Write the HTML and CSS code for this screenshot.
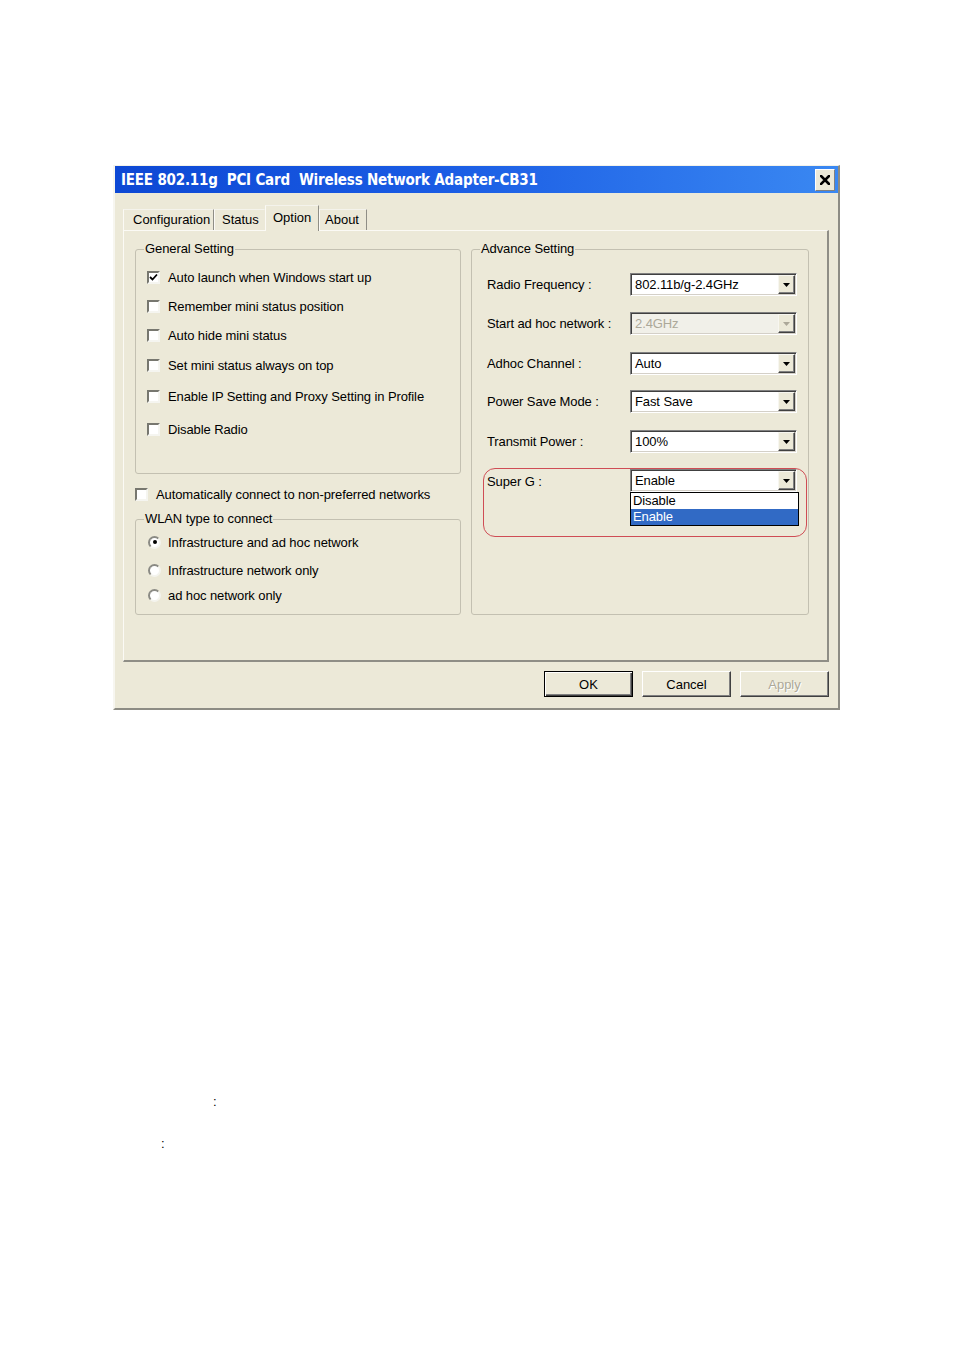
FILE: index.html
```html
<!DOCTYPE html>
<html>
<head>
<meta charset="utf-8">
<title>IEEE 802.11g PCI Card Wireless Network Adapter-CB31</title>
<link rel="stylesheet" href="styles.css">
</head>
<body>
<div class="dialog">
  <div class="titlebar">
    <span class="title">IEEE 802.11g&nbsp; PCI Card&nbsp; Wireless Network Adapter-CB31</span>
    <span class="close"><svg width="10" height="10" viewBox="0 0 10 10"><path d="M1 1 L9 9 M9 1 L1 9" stroke="#000" stroke-width="2.6" stroke-linecap="square"/></svg></span>
  </div>
  <div class="tabs">
    <span class="tab tab-config">Configuration</span>
    <span class="tab tab-status">Status</span>
    <span class="tab tab-option active">Option</span>
    <span class="tab tab-about">About</span>
  </div>
  <div class="panel">
    <div class="col-left">
      <fieldset class="group general">
        <legend>General Setting</legend>
        <div class="check-list">
          <div class="check"><span class="box"><svg width="9" height="9" viewBox="0 0 9 9"><path d="M1 4 L3.5 6.5 L8 1.5" fill="none" stroke="#000" stroke-width="1.8"/></svg></span><span>Auto launch when Windows start up</span></div>
          <div class="check"><span class="box"></span><span>Remember mini status position</span></div>
          <div class="check"><span class="box"></span><span>Auto hide mini status</span></div>
          <div class="check"><span class="box"></span><span>Set mini status always on top</span></div>
          <div class="check"><span class="box"></span><span>Enable IP Setting and Proxy Setting in Profile</span></div>
          <div class="check"><span class="box"></span><span>Disable Radio</span></div>
        </div>
      </fieldset>
      <div class="check auto-connect"><span class="box"></span><span>Automatically connect to non-preferred networks</span></div>
      <fieldset class="group wlan">
        <legend>WLAN type to connect</legend>
        <div class="radio-list">
          <div class="check radio-row"><span class="radio on"><span class="dot"></span></span><span>Infrastructure and ad hoc network</span></div>
          <div class="check radio-row"><span class="radio"></span><span>Infrastructure network only</span></div>
          <div class="check radio-row"><span class="radio"></span><span>ad hoc network only</span></div>
        </div>
      </fieldset>
    </div>
    <fieldset class="group advance">
      <legend>Advance Setting</legend>
      <div class="adv-rows">
        <div class="field"><span class="flabel">Radio Frequency :</span><span class="combo"><span class="cval">802.11b/g-2.4GHz</span><span class="cbtn"><svg width="7" height="4" viewBox="0 0 7 4"><path d="M0 0 H7 L3.5 4 Z" fill="#000"/></svg></span></span></div>
        <div class="field"><span class="flabel">Start ad hoc network :</span><span class="combo disabled"><span class="cval">2.4GHz</span><span class="cbtn"><svg width="7" height="4" viewBox="0 0 7 4"><path d="M0 0 H7 L3.5 4 Z" fill="#aca899"/></svg></span></span></div>
        <div class="field"><span class="flabel">Adhoc Channel :</span><span class="combo"><span class="cval">Auto</span><span class="cbtn"><svg width="7" height="4" viewBox="0 0 7 4"><path d="M0 0 H7 L3.5 4 Z" fill="#000"/></svg></span></span></div>
        <div class="field"><span class="flabel">Power Save Mode :</span><span class="combo"><span class="cval">Fast Save</span><span class="cbtn"><svg width="7" height="4" viewBox="0 0 7 4"><path d="M0 0 H7 L3.5 4 Z" fill="#000"/></svg></span></span></div>
        <div class="field"><span class="flabel">Transmit Power :</span><span class="combo"><span class="cval">100%</span><span class="cbtn"><svg width="7" height="4" viewBox="0 0 7 4"><path d="M0 0 H7 L3.5 4 Z" fill="#000"/></svg></span></span></div>
        <div class="superg">
          <span class="flabel sg-label">Super G :</span>
          <span class="combo"><span class="cval">Enable</span><span class="cbtn"><svg width="7" height="4" viewBox="0 0 7 4"><path d="M0 0 H7 L3.5 4 Z" fill="#000"/></svg></span></span>
          <div class="dropdown">
            <div class="item">Disable</div>
            <div class="item sel">Enable</div>
          </div>
        </div>
      </div>
    </fieldset>
  </div>
  <div class="buttons">
    <span class="btn default">OK</span>
    <span class="btn">Cancel</span>
    <span class="btn disabled">Apply</span>
  </div>
</div>
<div class="notes">
  <p class="note note-1">:</p>
  <p class="note note-2">:</p>
</div>
</body>
</html>
```
FILE: styles.css
```css
body {
  margin: 0;
  background: #fff;
  font-family: "Liberation Sans", Arial, sans-serif;
  font-size: 13px;
  color: #000;
}

.dialog {
  box-sizing: border-box;
  width: 727px;
  height: 545px;
  margin: 165px 0 0 113px;
  background: #ece9d8;
  border-top: 1px solid #f3f2ea;
  border-left: 2px solid #f7f6f0;
  border-right: 2px solid #8d8c84;
  border-bottom: 2px solid #8d8c84;
  display: flex;
  flex-direction: column;
}

.titlebar {
  height: 27px;
  flex: none;
  display: flex;
  align-items: center;
  justify-content: space-between;
  padding: 0 3px 0 6px;
  background: linear-gradient(90deg, #0d48d4 0%, #1a5ce4 45%, #3a88f2 100%);
}

.title {
  color: #fff;
  font-family: "DejaVu Sans Condensed", "Liberation Sans", sans-serif;
  font-stretch: condensed;
  font-weight: bold;
  font-size: 15px;
  letter-spacing: -0.2px;
  white-space: nowrap;
}

.close {
  box-sizing: border-box;
  width: 20px;
  height: 22px;
  background: #ece9d8;
  border: 1px solid;
  border-color: #fff #808080 #808080 #fff;
  display: flex;
  align-items: center;
  justify-content: center;
}

.tabs {
  height: 37px;
  flex: none;
  display: flex;
  align-items: flex-end;
  padding-left: 8px;
}

.tab {
  box-sizing: border-box;
  height: 21px;
  line-height: 19px;
  border-top: 1px solid #f4f3ec;
  border-left: 1px solid #fbfaf5;
  border-right: 1px solid #8f8e86;
  white-space: nowrap;
  background: #ece9d8;
}

.tab-config { width: 91px; padding-left: 9px; }
.tab-status { width: 51px; padding-left: 7px; border-right-color: transparent; }
.tab-option { width: 54px; padding-left: 7px; }
.tab-about { width: 48px; padding-left: 5px; }

.tab.active {
  height: 26px;
  line-height: 24px;
  margin-bottom: -1px;
  position: relative;
  z-index: 1;
}

.panel {
  box-sizing: border-box;
  height: 432px;
  flex: none;
  margin: 0 9px 0 8px;
  border-top: 1px solid #fbfaf5;
  border-left: 1px solid #fbfaf5;
  border-right: 2px solid #8f8e86;
  border-bottom: 2px solid #8f8e86;
  padding: 10px 0 0 11px;
  display: flex;
  gap: 10px;
  align-items: flex-start;
  letter-spacing: -0.1px;
}

.col-left {
  width: 326px;
  display: flex;
  flex-direction: column;
}

.group {
  box-sizing: border-box;
  margin: 0;
  padding: 0;
  min-width: 0;
  border: 1px solid #c3c0b1;
  border-radius: 3px;
}

.group legend {
  padding: 0 1px;
  margin-left: 8px;
  line-height: 16px;
}

.general { height: 233px; }

.check-list {
  display: grid;
  grid-template-rows: 29px 29px 30px 31px 33px 16px;
  padding: 12px 0 0 11px;
}

.check {
  display: flex;
  align-items: center;
  gap: 8px;
  height: 16px;
  white-space: nowrap;
}

.box {
  box-sizing: border-box;
  width: 13px;
  height: 13px;
  flex: none;
  background: #fff;
  border: 2px solid;
  border-color: #77776f #f5f5f0 #f5f5f0 #77776f;
  display: flex;
  align-items: center;
  justify-content: center;
}

.auto-connect { margin-top: 12px; }

.wlan {
  margin-top: 9px;
  height: 104px;
}

.radio-list {
  display: grid;
  grid-template-rows: 28px 25px 16px;
  padding: 7px 0 0 12px;
}

.radio-row { gap: 7px; }

.radio {
  box-sizing: border-box;
  width: 13px;
  height: 13px;
  flex: none;
  border-radius: 50%;
  background: #fff;
  border: 2px solid;
  border-color: #8a8a84 #f4f4ee #f4f4ee #8a8a84;
  display: flex;
  align-items: center;
  justify-content: center;
}

.dot {
  width: 4px;
  height: 4px;
  border-radius: 50%;
  background: #000;
}

.advance {
  width: 338px;
  height: 374px;
}

.adv-rows {
  display: grid;
  grid-template-rows: 39px 40px 38px 40px 38px auto;
  align-items: start;
  padding: 16px 0 0 15px;
}

.field {
  display: grid;
  grid-template-columns: 143px 167px;
  align-items: center;
}

.flabel {
  line-height: 23px;
  white-space: nowrap;
}

.sg-label { line-height: 26px; }

.combo {
  box-sizing: border-box;
  width: 167px;
  height: 23px;
  background: #fff;
  border: 1px solid;
  border-color: #808080 #fff #fff #808080;
  box-shadow: inset 1px 1px #404040, inset -1px -1px #d4d0c8;
  display: flex;
  align-items: center;
  justify-content: space-between;
  padding: 1px 1px 1px 4px;
}

.cval { white-space: nowrap; }

.cbtn {
  box-sizing: border-box;
  width: 17px;
  height: 19px;
  flex: none;
  background: #ece9d8;
  border: 1px solid;
  border-color: #f7f6f0 #404040 #404040 #f7f6f0;
  box-shadow: inset -1px -1px #808080;
  display: flex;
  align-items: center;
  justify-content: center;
}

.combo.disabled {
  background: #f1f0e9;
  color: #aca899;
}

.superg {
  box-sizing: border-box;
  width: 324px;
  height: 69px;
  margin-left: -4px;
  border: 1.5px solid #cf4d55;
  border-radius: 12px;
  padding: 0 0 0 3px;
  display: grid;
  grid-template-columns: 143px 169px;
  grid-template-rows: 23px auto;
  align-items: start;
}

.dropdown {
  grid-column: 2;
  box-sizing: border-box;
  width: 169px;
  border: 1px solid #000;
  background: #fff;
}

.item {
  line-height: 16px;
  padding-left: 2px;
}

.item.sel {
  background: #316ac5;
  color: #fff;
}

.buttons {
  display: flex;
  justify-content: flex-end;
  gap: 9px;
  margin: 9px 9px 0 0;
}

.btn {
  box-sizing: border-box;
  width: 89px;
  height: 26px;
  background: #ece9d8;
  border: 1px solid;
  border-color: #fff #404040 #404040 #fff;
  box-shadow: inset -1px -1px #808080;
  display: flex;
  align-items: center;
  justify-content: center;
}

.btn.default {
  border: 1px solid #000;
  box-shadow: inset 1px 1px #fff, inset -1px -1px #404040, inset -2px -2px #808080;
}

.btn.disabled {
  color: #aca899;
  text-shadow: 1px 1px #fff;
}

.notes {
  margin-top: 384px;
}

.note {
  margin: 0;
  line-height: 16px;
}

.note-1 { padding-left: 213px; }
.note-2 { padding-left: 161px; margin-top: 26px; }
```
